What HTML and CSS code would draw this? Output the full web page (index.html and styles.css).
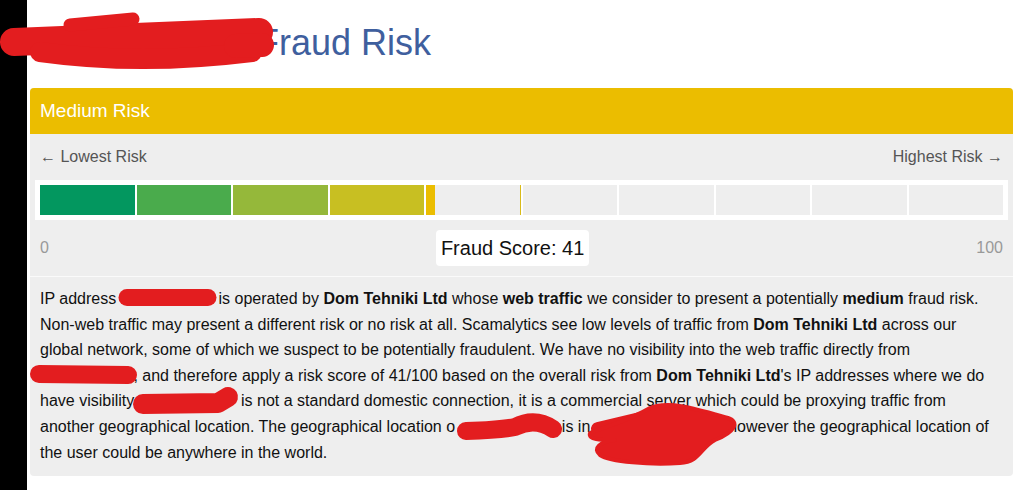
FILE: index.html
```html
<!DOCTYPE html>
<html lang="en">
<head>
<meta charset="utf-8">
<title>Fraud Risk</title>
<link rel="stylesheet" href="styles.css">
</head>
<body>
<div class="page">
  <div class="sidebar"></div>
  <main class="content">
    <h1 class="title"><span class="redacted title-ip"></span> Fraud Risk</h1>
    <section class="card">
      <div class="card-header">Medium Risk</div>
      <div class="card-scale">
        <div class="scale-labels"><span>&larr; Lowest Risk</span><span>Highest Risk &rarr;</span></div>
        <div class="bar">
          <div class="seg s1"></div>
          <div class="seg s2"></div>
          <div class="seg s3"></div>
          <div class="seg s4"></div>
          <div class="seg current"><div class="fill" style="width:10%"></div></div>
          <div class="seg"></div>
          <div class="seg"></div>
          <div class="seg"></div>
          <div class="seg"></div>
          <div class="seg"></div>
        </div>
        <div class="score-row">
          <span class="end">0</span>
          <span class="score">Fraud Score: 41</span>
          <span class="end">100</span>
        </div>
      </div>
      <div class="card-text">
        <p>IP address <span class="redacted ip"></span> is operated by <b>Dom Tehniki Ltd</b> whose <b>web traffic</b> we consider to present a potentially <b>medium</b> fraud risk. Non-web traffic may present a different risk or no risk at all. Scamalytics see low levels of traffic from <b>Dom Tehniki Ltd</b> across our global network, some of which we suspect to be potentially fraudulent. We have no visibility into the web traffic directly from <span class="redacted ip"></span>, and therefore apply a risk score of 41/100 based on the overall risk from <b>Dom Tehniki Ltd</b>'s IP addresses where we do have visibility<span class="redacted ip-dot"></span> is not a standard domestic connection, it is a commercial server which could be proxying traffic from another geographical location. The geographical location o<span class="redacted ip-of"></span> is in <span class="redacted place"></span>, however the geographical location of the user could be anywhere in the world.</p>
      </div>
    </section>
  </main>
  <svg class="redact" width="1035" height="490" viewBox="0 0 1035 490" aria-hidden="true">
    <g fill="none" stroke="#e31d1f" stroke-linecap="round" stroke-linejoin="round">
      <path d="M14 42 L259 32" stroke-width="28"/>
      <path d="M40 52 Q140 66 252 52" stroke-width="20"/>
      <path d="M236 46 L262 45" stroke-width="24"/>
      <path d="M70 25 L133 19" stroke-width="13"/>
      <path d="M127 297.5 L208 297.5" stroke-width="17"/>
      <path d="M39 374 L128 375" stroke-width="18"/>
      <path d="M143 404 L218 403 L228 397" stroke-width="20"/>
      <path d="M466 431 Q500 430 515 427 Q535 417 553 429" stroke-width="18"/>
      <path d="M598 429 L640 419" stroke-width="14"/>
    </g>
    <path d="M590 433 C610 425 630 420 650 408 C670 400 700 410 728 418 C740 422 735 432 715 440 C700 448 700 462 680 463 C650 465 610 462 600 455 C592 448 600 442 615 440 C600 440 588 440 590 433 Z" fill="#e31d1f" stroke="#e31d1f" stroke-width="4" stroke-linejoin="round"/>
  </svg>
</div>
</body>
</html>
```

FILE: styles.css
```css
html, body {
  margin: 0;
  padding: 0;
  background: #ffffff;
}

body {
  font-family: "Liberation Sans", Arial, sans-serif;
  color: #111111;
}

.page {
  position: relative;
  display: flex;
  width: 1035px;
  height: 490px;
  overflow: hidden;
}

.sidebar {
  width: 27px;
  flex: 0 0 27px;
  background: #000000;
}

.content {
  width: 983px;
  margin-left: 3px;
}

.title {
  margin: 22px 0 25px;
  font-size: 36px;
  line-height: 41px;
  font-weight: normal;
  color: #3f5f9e;
}

.redacted {
  display: inline-block;
  height: 1px;
}

.title-ip { width: 217px; }
.ip { width: 93.4px; }
.ip-dot { width: 102.3px; }
.ip-of { width: 102.3px; }
.place { width: 124.5px; }

.card {
  background: #eeeeee;
  border-radius: 4px;
  overflow: hidden;
}

.card-header {
  height: 46px;
  padding: 0 10px;
  background: #ebbd00;
  color: #ffffff;
  font-size: 19px;
  line-height: 46px;
}

.card-scale {
  padding: 12px 5px 10px;
  border-bottom: 1px solid #fafafa;
}

.scale-labels {
  display: flex;
  justify-content: space-between;
  padding: 0 5px;
  font-size: 16px;
  line-height: 22px;
  color: #555555;
}

.bar {
  display: flex;
  gap: 2px;
  margin-top: 12px;
  padding: 5px;
  background: #ffffff;
}

.seg {
  flex: 1 1 0;
  height: 30px;
  background: #eeeeee;
}

.s1 { background: #03975f; }
.s2 { background: #4aab4c; }
.s3 { background: #95b83a; }
.s4 { background: #c8bf22; }

.current {
  box-shadow: inset -1px 0 0 #d9bb1a;
}

.fill {
  height: 100%;
  background: #ebbd00;
}

.score-row {
  display: flex;
  justify-content: space-between;
  align-items: center;
  margin-top: 10px;
  padding: 0 5px;
}

.end {
  font-size: 16px;
  color: #999999;
}

.score {
  padding: 6px 5px;
  background: #ffffff;
  border-radius: 4px;
  font-size: 20px;
  line-height: 24px;
  color: #111111;
}

.card-text {
  padding: 9px 24px 11px 10px;
}

.card-text p {
  margin: 0;
  font-size: 16px;
  line-height: 25.6px;
  color: #111111;
}

.card-text b {
  font-weight: bold;
}

.redact {
  position: absolute;
  top: 0;
  left: 0;
  pointer-events: none;
}
```
